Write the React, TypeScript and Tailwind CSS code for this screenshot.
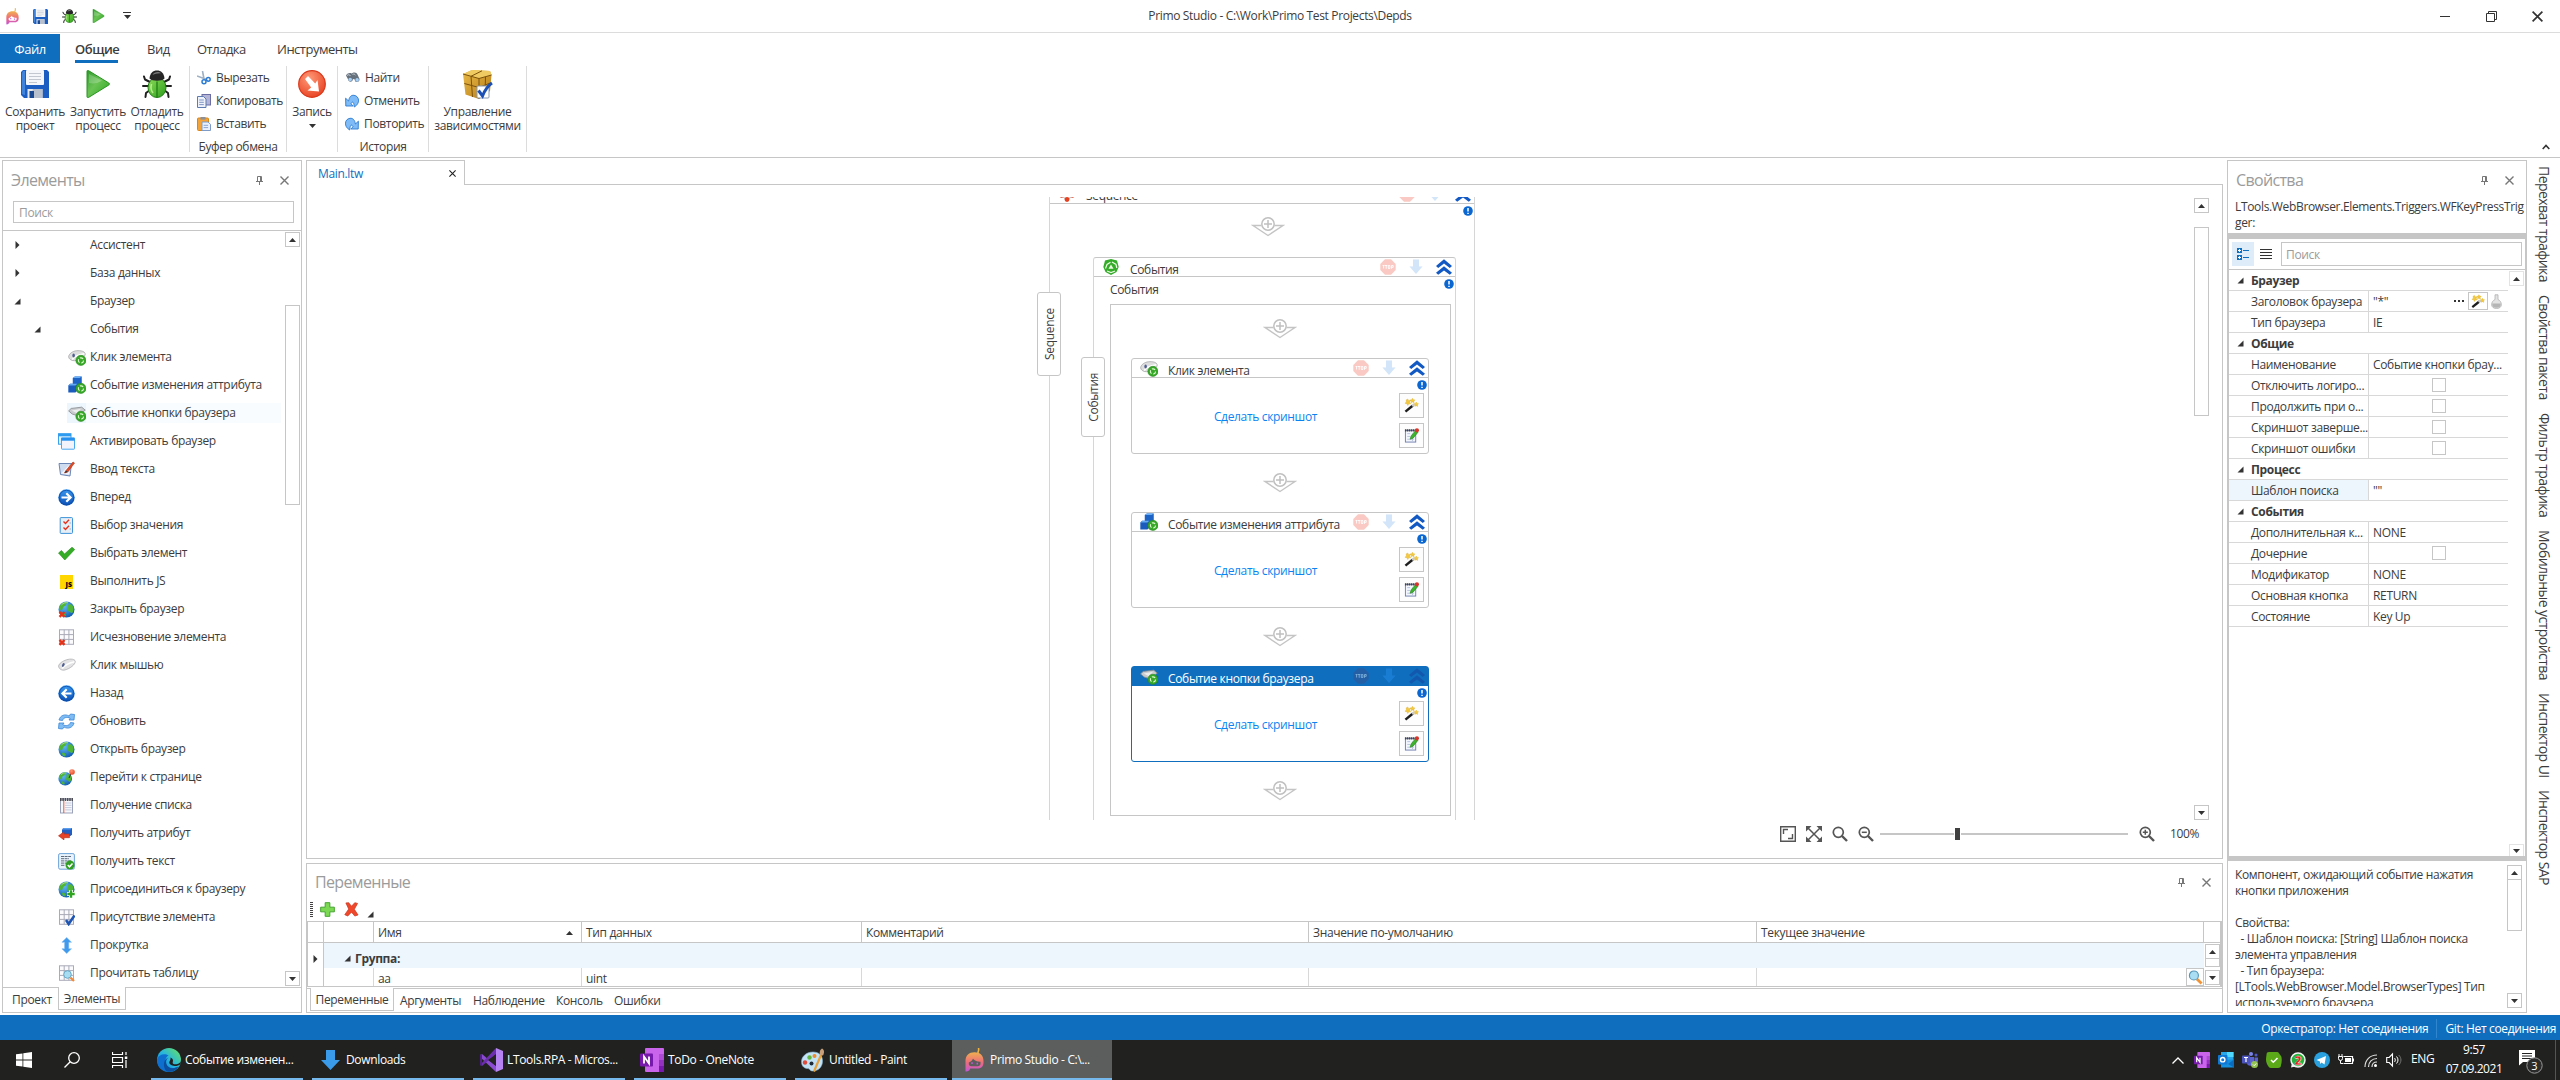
import React from 'react';

type P = { className?: string };
type SvgProps = { className?: string; box?: string; children: React.ReactNode };

const Svg = ({ className = 'w-4 h-4', box = '0 0 16 16', children }: SvgProps) => (
  <svg viewBox={box} className={`${className} block shrink-0`} fill="none">
    {children}
  </svg>
);

/* ---------- gradients shared by all icons ---------- */
const Defs = () => (
  <svg className="absolute w-0 h-0" aria-hidden="true">
    <defs>
      <linearGradient id="gBlue" x1="0" y1="0" x2="0" y2="1">
        <stop offset="0" stopColor="#3b9af0" />
        <stop offset="1" stopColor="#0a4fb4" />
      </linearGradient>
      <linearGradient id="gGreen" x1="0" y1="0" x2="1" y2="1">
        <stop offset="0" stopColor="#8ede5a" />
        <stop offset="1" stopColor="#2c9e1c" />
      </linearGradient>
      <linearGradient id="gPlay" x1="0" y1="0" x2="1" y2="1">
        <stop offset="0" stopColor="#2f9a2c" />
        <stop offset="0.45" stopColor="#6ac455" />
        <stop offset="1" stopColor="#2aa51d" />
      </linearGradient>
      <radialGradient id="gRed" cx="0.4" cy="0.3" r="0.8">
        <stop offset="0" stopColor="#ff9a78" />
        <stop offset="1" stopColor="#e63c1c" />
      </radialGradient>
      <radialGradient id="gGlobe" cx="0.35" cy="0.3" r="0.8">
        <stop offset="0" stopColor="#62b9f5" />
        <stop offset="1" stopColor="#0b55ac" />
      </radialGradient>
      <linearGradient id="gPrimo" x1="0" y1="0" x2="0" y2="1">
        <stop offset="0" stopColor="#f0b050" />
        <stop offset="0.5" stopColor="#ee6f78" />
        <stop offset="1" stopColor="#c455d8" />
      </linearGradient>
      <linearGradient id="gEdge" x1="0" y1="1" x2="1" y2="0">
        <stop offset="0" stopColor="#0c6fd0" />
        <stop offset="0.5" stopColor="#26b5e0" />
        <stop offset="1" stopColor="#6be55a" />
      </linearGradient>
      <linearGradient id="gBox" x1="0" y1="0" x2="1" y2="1">
        <stop offset="0" stopColor="#e9bb4a" />
        <stop offset="1" stopColor="#b77b14" />
      </linearGradient>
    </defs>
  </svg>
);

/* ---------- ribbon icons ---------- */
const Primo = ({ className = 'w-[13px] h-[17px]', face = '#ffffff' }: P & { face?: string }) => (
  <Svg className={className} box="0 0 19 24">
    <path d="M13 4.500c.4-1.600 1-2.400.6-4" stroke="#f3b33c" strokeWidth="1.600" strokeLinecap="round" />
    <path d="M.5 23.500V13C.5 7.500 4 4.300 9.500 4.300S18.500 7.500 18.500 13v1.500c0 4.500-3 6-6 6H5.200C4.600 22.500 2.600 23.800.5 23.500Z" fill="url(#gPrimo)" />
    <path d="M3.800 14.500C6 13.800 7.300 12.300 8 10.800c2 2.300 4.500 3.200 7.500 3v1.700c0 1.700-1.200 2.700-3 2.700H6.300c-1.600 0-2.500-.9-2.500-2.400Z" fill={face} />
    <path d="M7 14.300v1.800M12.300 14.800v1.800" stroke="#c455d8" strokeWidth="1.500" />
  </Svg>
);

const Save = ({ className = 'w-4 h-4' }: P) => (
  <Svg className={className} box="0 0 28 28">
    <path d="M2 0H26L28 2V28H3L0 25V2Z" fill="#1b5dc0" />
    <path d="M1 3 2 1h2v24l-2-.6-1-1Z" fill="#3f83dc" />
    <rect x="5" y="0" width="18" height="15" rx="1" fill="#f4f6f9" />
    <path d="M8 3.500h12M8 6.500h12M8 9.500h12M8 12.500h8" stroke="#c3c8d0" strokeWidth="1.200" />
    <rect x="6.500" y="19" width="15" height="9" fill="#e5e9ee" />
    <path d="M12 19h9.500v9H9Z" fill="#b7c0cc" />
    <rect x="8.500" y="21" width="4.500" height="7" fill="#1b4a92" />
  </Svg>
);

const Play = ({ className = 'w-4 h-4' }: P) => (
  <Svg className={className} box="0 0 24 28">
    <path d="M1 1.200C1 .2 2 .2 2.800.8L22.800 13c.9.7.9 1.400 0 2L2.800 27.300C1.800 27.800 1 27.600 1 26.800Z" fill="url(#gPlay)" stroke="#279321" strokeWidth="1" />
    <path d="M3 4v9c5 1 9 0 13-2.200Z" fill="#fff" opacity=".22" />
  </Svg>
);

const Bug = ({ className = 'w-4 h-4' }: P) => (
  <Svg className={className} box="0 0 30 28">
    <path d="M8 12 3 9.500 2 6.500M22 12l5-2.500 1-3M7 16H1M23 16h6M8 20l-4 3-.5 4M22 20l4 3 .5 4" stroke="#1f1f1f" strokeWidth="2" strokeLinecap="round" strokeLinejoin="round" />
    <ellipse cx="15" cy="17.500" rx="9" ry="10" fill="url(#gGreen)" stroke="#1f7d14" />
    <path d="M7.500 8.500C8 3 11 .5 15 .5s7 2.500 7.500 8C20 11.500 10 11.500 7.500 8.500Z" fill="#262626" />
    <path d="M10.500 5c1-2.200 3-3 5-3 1.600 0 2.600.4 3.600 1.400C16 3.200 13 4 10.500 5Z" fill="#777" />
    <path d="M15 11.500V27" stroke="#1f7d14" strokeWidth="1.300" />
    <path d="M9.500 14c-.8 3-.2 7 1.500 9" stroke="#c8f59c" strokeWidth="1.600" opacity=".8" />
  </Svg>
);

const Cut = () => (
  <Svg className="w-[14px] h-[14px]" box="0 0 14 14">
    <path d="M5.500 0 7 8M0 5l9 3.200" stroke="#9db0c4" strokeWidth="1.600" />
    <circle cx="7" cy="10.800" r="2" stroke="#2c7cd4" strokeWidth="1.500" />
    <circle cx="11.300" cy="8.300" r="1.900" stroke="#2c7cd4" strokeWidth="1.500" />
  </Svg>
);
const Copy = () => (
  <Svg className="w-[14px] h-[14px]" box="0 0 14 14">
    <rect x="5" y=".5" width="8.500" height="10.500" fill="#b4b5d6" stroke="#6b6ea5" />
    <path d="M.5 2.500h6l2.500 2.500v8.500H.5Z" fill="#eef2fb" stroke="#5d7bb0" />
    <path d="M2.200 6h4.600M2.200 8.300h4.600M2.200 10.600h4.600" stroke="#7f96c4" />
  </Svg>
);
const Paste = () => (
  <Svg className="w-[14px] h-[14px]" box="0 0 14 14">
    <rect x=".5" y="1" width="11" height="12.500" rx="1" fill="#f2a33a" stroke="#d98618" />
    <rect x="3.500" y="0" width="5" height="2.600" fill="#8d9097" />
    <path d="M5 5h6l2.500 2.300v6.200H5Z" fill="#e9f0fa" stroke="#7d9bc6" />
    <path d="M6.600 8.300h4.500M6.600 10.600h4.500" stroke="#8aa5cf" />
  </Svg>
);
const Record = () => (
  <Svg className="w-7 h-7" box="0 0 28 28">
    <circle cx="14" cy="14" r="13.300" fill="url(#gRed)" stroke="#d9381a" strokeWidth="1.200" />
    <path d="M7 9 10 6l7.200 7.500L19.500 10l1.500 11.500-11.500-1 3.700-3Z" fill="#fff" />
  </Svg>
);
const Find = () => (
  <Svg className="w-[15px] h-[14px]" box="0 0 14 14">
    <path d="M.5 4.500C2 2 4.500 1.500 6 2.500l2-1c2-.4 3.400.4 4 2L14 8c.3 2.400-2.200 4-4.200 2.500L8.800 8 7.400 8.200 6.800 10C5 11.500 2.800 10.500 2.400 8Z" fill="#66717e" />
    <path d="M1.500 4.500C3 3.300 4 3.500 5 5M7 3.300c1.600-.6 2.500 0 3 1" stroke="#c6ced6" />
    <circle cx="4.700" cy="8.500" r="1.800" fill="#a4d0f5" />
    <circle cx="11.600" cy="8.900" r="1.800" fill="#a4d0f5" />
  </Svg>
);
const Undo = ({ className = '' }: P) => (
  <Svg className={`w-[14px] h-[14px] ${className}`} box="0 0 14 14">
    <path d="M.6 4.200.8 12h7.400L6 9.800C7.200 7 9 7.500 9.300 13 15.500 9.500 14.500 2 9 1.300 6 1 4.200 3 3.600 7Z" fill="#7fbcf7" stroke="#2b7ad0" strokeWidth=".9" strokeLinejoin="round" />
  </Svg>
);
const Packages = () => (
  <Svg className="w-[31px] h-[31px]" box="0 0 31 31">
    <path d="M1 5 10 1l18 1 1.500 4L28 22 17 30 3.500 25.500Z" fill="url(#gBox)" />
    <path d="M1 5 10 1l18 1 1.500 4L17 9.500Z" fill="#efca62" />
    <path d="M1 5l16 4.500L29.500 6M17 9.500V30M9 7.300 10.500 28M2.300 14.500 17 18.500l12-4.800M9 7.300 20 1.800M23.500 8 23 26" stroke="#7c520c" strokeWidth="1" />
    <rect x="15" y="17" width="12" height="12" rx="1" fill="#fff" stroke="#8a9ab0" />
    <path d="m16.500 21.500 4 5.500C22.500 22 25.500 17 30 14" stroke="#1c50b5" strokeWidth="3" />
  </Svg>
);

/* ---------- tree icons ---------- */
const Badge = () => (
  <g>
    <circle cx="12.200" cy="11.700" r="4.800" fill="#37a827" stroke="#22841a" strokeWidth=".5" />
    <circle cx="12.200" cy="11.700" r="2.400" stroke="#dff8d2" strokeWidth="1" strokeDasharray="3.400 1.600" />
  </g>
);
const Mouse = () => (
  <Svg className="w-[18px] h-[18px]" box="0 0 17 17">
    <path d="M.6 9.500C1 7 4 5 8 3.600c4-1.200 8-.7 8.300 1.400.2 3-5 7-9.800 8.200C3.500 14 .6 12 .6 9.500Z" fill="#e3e3e5" stroke="#a8a8ac" strokeWidth=".7" />
    <path d="M4 12C5.500 9.500 9 7 15.500 5.500" stroke="#fff" strokeWidth="1.500" />
    <ellipse cx="5" cy="8.500" rx="1.100" ry="1.900" fill="#4f5f8f" transform="rotate(30 5 8.500)" />
  </Svg>
);
const MouseEvt = () => (
  <Svg className="w-[18px] h-[18px]" box="0 0 17 17">
    <path d="M.6 8.200C1 5.200 4.500 3 8 2.600c4-.3 8 .4 8.300 3.200C15.800 9 10 12 6 12 3 12 .6 10.200.6 8.200Z" fill="#dededf" stroke="#a0a0a4" strokeWidth=".7" />
    <path d="M4 11C5.500 8.500 9 6.500 15.500 5.500" stroke="#fff" strokeWidth="1.500" />
    <ellipse cx="5.300" cy="7" rx="1.200" ry="1.900" fill="#4f5f8f" />
    <Badge />
  </Svg>
);
const CubesEvt = () => (
  <Svg className="w-[18px] h-[18px]" box="0 0 17 17">
    <path d="M4.500 2 6.500.5H13V7L11 8.500H4.500Z" fill="#1d63c6" />
    <path d="M4.500 2 6.500.5H13L11 2Z" fill="#6cb0f5" />
    <path d="M.3 9 2 7.400h6.800V14L7 15.700H.3Z" fill="#1a5bbd" />
    <path d="M.3 9 2 7.400h6.800L7 9Z" fill="#63a9f2" />
    <path d="M9 9.500 10.500 8H15v6l-2 1.500H9Z" fill="#1a5bbd" />
    <Badge />
  </Svg>
);
const KeyEvt = () => (
  <Svg className="w-[18px] h-[18px]" box="0 0 17 17">
    <path d="M.6 6.500 3 4.200 13 3l3.300 2.800L9 11 4 9.500Z" fill="#c9cbce" stroke="#8a8d92" strokeWidth=".8" />
    <path d="M3.500 6.200 12.500 4.500l-4.500 4Z" fill="#eceded" />
    <Badge />
  </Svg>
);
const Windows2 = () => (
  <Svg className="w-[17px] h-[17px]" box="0 0 17 17">
    <rect x=".5" y=".7" width="12.500" height="10.500" fill="#dfeefb" stroke="#39a0ec" />
    <rect x=".5" y=".7" width="12.500" height="2.600" fill="#2f9bf0" />
    <rect x="3.500" y="5" width="13" height="11.200" rx=".6" fill="#f2f3fb" stroke="#4aa8ee" />
    <rect x="3.200" y="4.700" width="13.500" height="3" fill="#2590ee" />
  </Svg>
);
const Input = () => (
  <Svg className="w-[17px] h-[17px]" box="0 0 17 17">
    <path d="M1 2.500h12.500L12 15 2.500 13.500Z" fill="#cfdcf0" stroke="#6c86b5" />
    <path d="M3 12.500 11 4l.5 9.500Z" fill="#eef4fc" />
    <path d="M6.500 12 8 9.500 15 1l1.500 1-6.700 9Z" fill="#e34a25" stroke="#a83216" strokeWidth=".6" />
    <path d="m6.500 12 1.500-2.500 1.700 1.400Z" fill="#333" />
  </Svg>
);
const ArrowBall = ({ className = '' }: P) => (
  <Svg className={`w-[17px] h-[17px] ${className}`} box="0 0 17 17">
    <circle cx="8.500" cy="8.500" r="8.200" fill="url(#gBlue)" />
    <circle cx="8.500" cy="8.500" r="7.200" stroke="#0b4ba8" strokeWidth=".8" />
    <path d="M3.500 8.500h8M8.300 4.200l4.300 4.300-4.300 4.300" stroke="#fff" strokeWidth="2.200" />
  </Svg>
);
const CheckList = () => (
  <Svg className="w-[17px] h-[17px]" box="0 0 17 17">
    <rect x="2.200" y=".6" width="12.300" height="15.800" rx=".8" fill="#e8eef6" stroke="#3f93d8" />
    <path d="m5.500 4.500 2 2L11 2.800M5.500 10.500l2 2L11 8.800" stroke="#e2321c" strokeWidth="1.400" />
    <path d="M11.500 6h1.500M11.500 12h1.500" stroke="#9eb0c7" />
  </Svg>
);
const Check = () => (
  <Svg className="w-[17px] h-[17px]" box="0 0 17 17">
    <path d="M.5 8 3.500 5.500 6.500 9 14 2.200 16.700 4.500 6.800 15Z" fill="#35ac26" stroke="#218a18" strokeWidth=".6" />
  </Svg>
);
const Js = () => (
  <div className="w-[13px] h-[14px] bg-[#ffd600] flex items-end justify-end ml-[2px] mt-px">
    <span className="text-[7px] leading-[8px] font-extrabold tracking-normal text-black pr-px">JS</span>
  </div>
);
const GlobeShape = () => (
  <g>
    <circle cx="8.500" cy="8.500" r="8" fill="url(#gGlobe)" />
    <path d="M2 4.500C3.500 2 6.500.6 9 1c.5 1.500-1.600 1.800-1.200 3.200-1 1.500-2.800 1-3 3C4.500 9 3 9.200 1.500 9c-.5-1.400-.3-3 .5-4.500ZM10.500 3.500c1.500-.6 3-.2 4.300 1.300 1 2.200 1 4.700-.3 6.900-1.700 1-2.300-.9-3.700-1.400-1.600-.5-2-2-.8-3.600.6-.9-.5-1.900.5-3.200ZM4 12c1.500-.6 3 0 3.800 1.500.3 1.200-.6 1.800-1.600 1.800C4.700 14.500 4 13.500 4 12Z" fill="#4fb536" />
    <path d="M3.500 4C5 2 7.500 1.300 10 1.800" stroke="#d4f0c0" strokeWidth="1" opacity=".7" />
  </g>
);
const RedX = () => <path d="m1.500 11 5 4.800M6.500 11l-5 4.800" stroke="#e5331a" strokeWidth="2.400" />;
const GridShape = () => (
  <g>
    <rect x="1.500" y=".8" width="14" height="14.500" fill="#fbfbfd" stroke="#a9abb8" />
    <path d="M6.200.8v14.500M10.900.8v14.500M1.500 5.600h14M1.500 10.400h14" stroke="#a9abb8" strokeWidth="1" />
  </g>
);
const Wrap17 = ({ children }: { children: React.ReactNode }) => (
  <Svg className="w-[17px] h-[17px]" box="0 0 17 17">
    {children}
  </Svg>
);
const Globe = () => <Wrap17><GlobeShape /></Wrap17>;
const GlobeX = () => <Wrap17><GlobeShape /><RedX /></Wrap17>;
const GlobeGo = () => (
  <Wrap17>
    <g transform="translate(0 2.500) scale(.85)"><GlobeShape /></g>
    <path d="M13.500 3.500 11 9" stroke="#333" strokeWidth="1" />
    <circle cx="14" cy="3" r="2.800" fill="url(#gRed)" />
  </Wrap17>
);
const GlobePlus = () => (
  <Wrap17>
    <GlobeShape />
    <path d="M13 9v8M9 13h8" stroke="#fff" strokeWidth="4" />
    <path d="M13 9.300v7.400M9.300 13h7.400" stroke="#2fa41f" strokeWidth="2.400" />
  </Wrap17>
);
const GridX = () => <Wrap17><GridShape /><RedX /></Wrap17>;
const GridCheck = () => (
  <Wrap17>
    <GridShape />
    <path d="m8 11 2.700 4L16.500 6.500" stroke="#1d55b4" strokeWidth="2.600" />
  </Wrap17>
);
const GridFind = () => (
  <Wrap17>
    <GridShape />
    <circle cx="9.500" cy="9.500" r="3.800" fill="#a8dcf0" stroke="#62a8c8" />
    <path d="m12.500 12.500 3.500 3.500" stroke="#f08a3a" strokeWidth="2.200" />
  </Wrap17>
);
const Refresh = () => (
  <Wrap17>
    <path d="M1 7C2 2.500 7 .5 11 3l1.500-2 4 .5-.5 5.500H11l1.200-1.700C9 3.500 5.500 4.500 4.500 7.500Z" fill="#7fbcf4" stroke="#3a86d6" strokeWidth=".8" />
    <path d="M16 10c-1 4.500-6 6.500-10 4l-1.500 2-4-.5.5-5.500h5l-1.200 1.700c3.200 1.800 6.700.8 7.700-2.200Z" fill="#7fbcf4" stroke="#3a86d6" strokeWidth=".8" />
  </Wrap17>
);
const ListPad = () => (
  <Wrap17>
    <rect x="2.500" y="2" width="12" height="14" fill="#f7f8fc" stroke="#9aa3ba" />
    <path d="M2 2.500h13" stroke="#4c4c55" strokeWidth="3" strokeDasharray="1.600 .7" />
    <path d="M7 6h6.500M7 8.300h6.500M7 10.600h6.500M7 12.900h6.500" stroke="#c4cadb" />
    <path d="M5.800 4v12" stroke="#e25b45" />
  </Wrap17>
);
const AttrArrow = () => (
  <Wrap17>
    <path d="M4 4.500 5.500 3h8.500v6.500L12.500 11H4Z" fill="#1d5fc4" />
    <path d="M4 4.500 5.500 3h8.500l-1.500 1.500Z" fill="#5c9eee" />
    <path d="M.5 10.800 6 6.800v2.200h5.500v3.700H6v2.200Z" fill="#e6422a" stroke="#b82c14" strokeWidth=".6" />
  </Wrap17>
);
const TextOk = () => (
  <Wrap17>
    <rect x=".6" y=".6" width="15.800" height="15.600" rx="1.500" fill="#eaf2fb" stroke="#6ea4d8" />
    <path d="M3 3.500h10M3 5.700h8M3 7.900h10M3 10.100h5M3 12.300h4" stroke="#5d6b7c" strokeWidth="1" strokeDasharray="3 .6" />
    <circle cx="12" cy="12" r="4.500" fill="#2f9e22" />
    <path d="m9.700 12 1.800 1.800 3-3.300" stroke="#fff" strokeWidth="1.500" />
  </Wrap17>
);
const Scroll = () => (
  <Wrap17>
    <path d="m8.700.5 4.800 4.700h-2.700v6.600h2.700l-4.800 4.700-4.800-4.700h2.700V5.200H3.900Z" fill="#3f9aee" stroke="#7fb9ec" strokeWidth=".6" />
  </Wrap17>
);

/* ---------- small glyphs ---------- */
const Pin = () => (
  <Svg className="w-[9px] h-[9px]" box="0 0 9 9">
    <path d="M2.500.5h4v5h-4ZM5.500.5v5M1 5.500h7M4.500 5.500V9" stroke="#777" />
  </Svg>
);
const Close = ({ className = 'w-[9px] h-[9px] text-[#777]' }: P) => (
  <Svg className={className} box="0 0 9 9">
    <path d="m.5.5 8 8M8.500.5l-8 8" stroke="currentColor" strokeWidth="1.400" />
  </Svg>
);
const Tri = ({ dir }: { dir: 'up' | 'down' | 'right' | 'corner' }) => {
  const d = { up: 'M0 5 3.500 1 7 5Z', down: 'M0 1h7L3.500 5Z', right: 'M1.500 0v8l4-4Z', corner: 'M6.500 .5v6h-6Z' }[dir];
  return (
    <Svg className={dir === 'right' ? 'w-[7px] h-[8px]' : dir === 'corner' ? 'w-[7px] h-[7px]' : 'w-[7px] h-[6px]'} box={dir === 'right' ? '0 0 7 8' : dir === 'corner' ? '0 0 7 7' : '0 0 7 6'}>
      <path d={d} fill="#333" />
    </Svg>
  );
};
const SBtn = ({ dir, className = '' }: { dir: 'up' | 'down'; className?: string }) => (
  <div className={`w-[15px] h-[15px] shrink-0 bg-white border border-[#c6c6c6] flex items-center justify-center ${className}`}>
    <Tri dir={dir} />
  </div>
);
const Loupe = ({ sign = '' }: { sign?: string }) => (
  <Svg className="w-4 h-4">
    <circle cx="6.300" cy="6.300" r="5" stroke="#555" strokeWidth="1.700" />
    <path d="m10 10 5 5" stroke="#555" strokeWidth="2.400" />
    {sign && <path d={sign} stroke="#555" strokeWidth="1.500" />}
  </Svg>
);
const Wand = ({ className = 'w-[15px] h-[15px]' }: P) => (
  <Svg className={className}>
    <path d="m1.500 14.500 8-6.500" stroke="#1d1d1d" strokeWidth="2.600" />
    <path d="m8.800 8.600 2.400-2" stroke="#c8c8c8" strokeWidth="2.600" />
    <path d="m4 1 1 1.800 2-.3-1 1.900 1.300 1.700-2.200.1L4 8 3 6 1 5.600l1.600-1.400L2.300 2ZM9 .3l1 1.500 1.700.2-1.200 1.300L10.800 5 9 4.300 7.500 5l.2-1.700L6.500 2l1.800-.2ZM13 4.300l.8 1.500 1.700.3-1.200 1.200.2 1.700-1.500-.8-1.500.7.3-1.700-1.200-1.200 1.700-.2Z" fill="#f5c93c" stroke="#d9ac24" strokeWidth=".4" />
  </Svg>
);
const Edit = () => (
  <Svg className="w-[15px] h-[15px]">
    <rect x="1.500" y="2.500" width="11" height="12.500" fill="#f4f6fd" stroke="#6f7fae" />
    <path d="M1 2.500h11.500" stroke="#444" strokeWidth="2.400" strokeDasharray="1.500 .6" />
    <path d="M3.500 6h3M3.500 9h3M3.500 12h7M9 6v8" stroke="#b5bfdd" />
    <path d="m6.500 12 1-3.500L12.500 2.500l2.500 2-5.300 6.300Z" fill="#3cb52c" stroke="#247c1a" strokeWidth=".6" />
    <circle cx="13.800" cy="2.500" r="2.200" fill="#d8352a" />
  </Svg>
);
const Lens = () => (
  <Svg className="w-[15px] h-[15px]">
    <path d="m9.500 9.500 5 5" stroke="#f09236" strokeWidth="3" />
    <circle cx="6.300" cy="5.800" r="4.800" fill="#a9def3" stroke="#5796b8" strokeWidth="1.200" />
  </Svg>
);

/* ---------- title bar + ribbon ---------- */
const TitleBar = () => (
  <div className="h-[33px] border-b border-[#dcdcdc] flex items-center relative">
    <div className="flex items-center pl-[6px]">
      <Primo />
      <Save className="w-[15px] h-[15px] ml-[14px]" />
      <Bug className="w-[15px] h-[14px] ml-[14px]" />
      <Play className="w-[13px] h-[14px] ml-[15px]" />
      <div className="ml-[18px] flex flex-col items-center gap-px">
        <div className="w-2 h-px bg-[#333]" />
        <Tri dir="down" />
      </div>
    </div>
    <div className="absolute inset-x-0 text-center pointer-events-none">Primo Studio - C:\Work\Primo Test Projects\Depds</div>
    <div className="ml-auto flex items-center pr-[17px]">
      <div className="w-[10px] h-px bg-[#333]" />
      <Svg className="w-[11px] h-[11px] ml-[36px]" box="0 0 11 11">
        <path d="M.5 2.500h8v8h-8ZM2.500 2.500v-2h8v8h-2" stroke="#333" />
      </Svg>
      <Close className="w-[11px] h-[11px] ml-[35px] text-[#333]" />
    </div>
  </div>
);

const Big = ({ icon, l1, l2, className }: { icon: React.ReactNode; l1: string; l2?: string; className: string }) => (
  <div className={`flex flex-col items-center pt-1 shrink-0 whitespace-nowrap ${className}`}>
    <div className="h-7 flex items-center">{icon}</div>
    <div className="mt-[7px] h-[14px] leading-[14px]">{l1}</div>
    {l2 ? <div className="leading-[14px]">{l2}</div> : <div className="mt-[4px]"><Tri dir="down" /></div>}
  </div>
);
const Small = ({ icon, label }: { icon: React.ReactNode; label: string }) => (
  <div className="h-[23px] flex items-center gap-[5px] whitespace-nowrap">{icon}<span className="pt-px">{label}</span></div>
);
const RSep = () => <div className="w-px h-[86px] bg-[#dcdcdc] shrink-0" />;

const Ribbon = () => (
  <div className="h-[125px] border-b border-[#c6c6c6] relative flex flex-col">
    <div className="h-[34px] flex items-start pt-px text-[13px] tracking-[-0.5px] whitespace-nowrap">
      <div className="w-[60px] h-[29px] bg-[#106ebe] text-white flex items-center justify-center pt-px">Файл</div>
      <div className="ml-[15px] h-[29px] w-[43px] border-b-[3px] border-[#106ebe] font-semibold flex items-center pt-[3px]">Общие</div>
      <div className="ml-[29px] h-[29px] w-[50px] flex items-center">Вид</div>
      <div className="h-[29px] w-[80px] flex items-center">Отладка</div>
      <div className="h-[29px] flex items-center">Инструменты</div>
    </div>
    <div className="flex">
      <Big className="w-[60px] ml-[5px]" icon={<Save className="w-7 h-7" />} l1="Сохранить" l2="проект" />
      <Big className="w-[60px] ml-[3px]" icon={<Play className="w-6 h-7" />} l1="Запустить" l2="процесс" />
      <Big className="w-[58px]" icon={<Bug className="w-[30px] h-7" />} l1="Отладить" l2="процесс" />
      <div className="w-[3px]" />
      <RSep />
      <div className="w-[96px] pl-[7px] shrink-0">
        <Small icon={<Cut />} label="Вырезать" />
        <Small icon={<Copy />} label="Копировать" />
        <Small icon={<Paste />} label="Вставить" />
        <div className="-ml-[7px] text-center h-[22px] leading-[24px] whitespace-nowrap">Буфер обмена</div>
      </div>
      <RSep />
      <Big className="w-[50px]" icon={<Record />} l1="Запись" />
      <RSep />
      <div className="w-[90px] pl-[7px] shrink-0">
        <Small icon={<Find />} label="Найти" />
        <Small icon={<Undo />} label="Отменить" />
        <Small icon={<Undo className="-scale-x-100" />} label="Повторить" />
        <div className="-ml-[7px] text-center h-[22px] leading-[24px]">История</div>
      </div>
      <RSep />
      <Big className="w-[97px]" icon={<Packages />} l1="Управление" l2="зависимостями" />
      <RSep />
    </div>
    <Svg className="w-2 h-[6px] absolute right-[10px] bottom-[7px]" box="0 0 8 6">
      <path d="m.7 5 3.300-3.500L7.300 5" stroke="#333" strokeWidth="1.600" />
    </Svg>
  </div>
);

const PanelTitle = ({ children, className = '' }: { children: React.ReactNode; className?: string }) => (
  <div className={`h-[38px] flex items-center pl-2 pr-3 ${className}`}>
    <span className="text-[16px] text-[#9b9b9b] grow tracking-[-0.65px]">{children}</span>
    <Pin />
    <Close className="w-[9px] h-[9px] text-[#777] ml-4 mt-px" />
  </div>
);

/* ---------- elements tree ---------- */
type Row = { t: string; i?: React.ReactNode; lvl?: number; sel?: boolean; arrow?: 'right' | 'corner' };
const tree: Row[] = [
  { t: 'Ассистент', arrow: 'right', lvl: 0 },
  { t: 'База данных', arrow: 'right', lvl: 0 },
  { t: 'Браузер', arrow: 'corner', lvl: 0 },
  { t: 'События', arrow: 'corner', lvl: 1 },
  { t: 'Клик элемента', i: <MouseEvt />, lvl: 2 },
  { t: 'Событие изменения аттрибута', i: <CubesEvt />, lvl: 2 },
  { t: 'Событие кнопки браузера', i: <KeyEvt />, lvl: 2, sel: true },
  { t: 'Активировать браузер', i: <Windows2 /> },
  { t: 'Ввод текста', i: <Input /> },
  { t: 'Вперед', i: <ArrowBall /> },
  { t: 'Выбор значения', i: <CheckList /> },
  { t: 'Выбрать элемент', i: <Check /> },
  { t: 'Выполнить JS', i: <Js /> },
  { t: 'Закрыть браузер', i: <GlobeX /> },
  { t: 'Исчезновение элемента', i: <GridX /> },
  { t: 'Клик мышью', i: <Mouse /> },
  { t: 'Назад', i: <ArrowBall className="-scale-x-100" /> },
  { t: 'Обновить', i: <Refresh /> },
  { t: 'Открыть браузер', i: <Globe /> },
  { t: 'Перейти к странице', i: <GlobeGo /> },
  { t: 'Получение списка', i: <ListPad /> },
  { t: 'Получить атрибут', i: <AttrArrow /> },
  { t: 'Получить текст', i: <TextOk /> },
  { t: 'Присоединиться к браузеру', i: <GlobePlus /> },
  { t: 'Присутствие элемента', i: <GridCheck /> },
  { t: 'Прокрутка', i: <Scroll /> },
  { t: 'Прочитать таблицу', i: <GridFind /> },
];

const TreeRow = ({ r }: { r: Row }) => (
  <div className="h-7 flex items-center">
    <div className={`h-5 flex items-center shrink-0 ${r.lvl === 2 ? 'w-[64px]' : r.lvl === 1 ? 'w-[85px] pl-[31px]' : r.arrow ? 'w-[85px] pl-[11px]' : 'w-[55px]'}`}>
      {r.arrow && <Tri dir={r.arrow} />}
    </div>
    {r.i && (
      <div className={`h-5 flex items-center shrink-0 ${r.lvl === 2 ? 'w-[19px] pl-px' : 'w-[30px]'} ${r.sel ? 'bg-[#edf5fd]' : ''}`}>{r.i}</div>
    )}
    <div className={`h-5 grow mr-5 flex items-center whitespace-nowrap ${r.lvl === 2 ? 'pl-[4px]' : 'pl-[2px]'} ${r.sel ? 'bg-[#f9fcff]' : ''}`}>{r.t}</div>
  </div>
);

const Elements = () => (
  <div className="w-[300px] h-[853px] ml-[2px] border border-[#c6c6c6] flex flex-col shrink-0">
    <PanelTitle>Элементы</PanelTitle>
    <div className="mt-[2px] ml-[10px] w-[281px] h-[22px] border border-[#c6c6c6] flex items-center pl-[5px] pt-[2px] text-[#9b9b9b]">Поиск</div>
    <div className="mt-[7px] border-t border-[#c6c6c6] h-[757px] flex shrink-0">
      <div className="grow">{tree.map((r) => <TreeRow key={r.t} r={r} />)}</div>
      <div className="w-[16px] -ml-4 flex flex-col pt-px pb-px">
        <SBtn dir="up" />
        <div className="mt-[58px] w-[15px] h-[200px] border border-[#c6c6c6]" />
        <SBtn dir="down" className="mt-auto" />
      </div>
    </div>
    <div className="flex border-t border-[#c6c6c6] h-[25px] pl-[9px]">
      <div className="w-[46px] h-[22px] flex items-center pt-px">Проект</div>
      <div className="w-[68px] h-[23px] -mt-px bg-white border border-t-0 border-[#c6c6c6] flex items-center justify-center pt-[2px]">Элементы</div>
    </div>
  </div>
);

/* ---------- workflow canvas ---------- */
const AddPoint = ({ className }: P) => (
  <svg viewBox="0 0 34 20" className={`absolute w-[34px] h-5 ${className}`} fill="none">
    <path d="M10.500 8.500H2L17 18.500 32 8.500H23.500" stroke="#c4c4c4" strokeWidth="1.400" />
    <circle cx="17" cy="7" r="6.200" fill="#fff" stroke="#c0c0c0" strokeWidth="1.500" />
    <path d="M17 3v8M13 7h8" stroke="#c0c0c0" strokeWidth="1.500" />
  </svg>
);
const InfoDot = ({ className = '' }: P) => (
  <svg viewBox="0 0 10 10" className={`w-[10px] h-[10px] absolute ${className}`}>
    <circle cx="5" cy="5" r="4.800" fill="#0a66d0" />
    <path d="M5 2v3.500M5 6.800v1.300" stroke="#fff" strokeWidth="1.500" />
  </svg>
);
const HeadIcons = ({ dim = false }: { dim?: boolean }) => (
  <div className="ml-auto flex items-center shrink-0">
    <Svg className={dim ? 'w-4 h-4 opacity-45' : 'w-4 h-4 opacity-30'}>
      <path d="M5 .3h6L15.700 5v6L11 15.700H5L.3 11V5Z" fill={dim ? '#3d4f8a' : '#f0503c'} />
      <path d="M2.600 6.500h2M3.600 6.500v3M5 6.500h2.400M6.200 6.500v3.300M8.300 6.500h1.600v3H8.300ZM11.500 9.800V6.500h1.700v1.800h-1.700" stroke="#fff" strokeWidth=".9" />
    </Svg>
    <Svg className="w-[14px] h-4 ml-[13px] opacity-35" box="0 0 14 16">
      <path d="M4 .5h6v7h3.500L7 15 .5 7.500H4Z" fill={dim ? '#2f9bff' : '#7fb6ee'} />
    </Svg>
    <Svg className={dim ? 'w-4 h-4 ml-[13px] opacity-70' : 'w-4 h-4 ml-[13px]'}>
      <path d="M8 .2 16 7l-2.200 2L8 4.500 2.200 9 0 7ZM8 7.200l8 6.600-2.200 2L8 11.400l-5.800 4.400-2.200-2Z" fill={dim ? '#1450a8' : '#1259c4'} />
    </Svg>
  </div>
);
const Recycle = () => (
  <Svg className="w-4 h-4">
    <path d="M2 1.500 8 0l6 1.500L15.700 8 13.500 13 8 16 2.500 13 .3 8Z" fill="#35ab2a" />
    <path d="M2.500 9.500 4 5.500 7.500 3.200M9 3l4 2.500.8 3.500M12 12 8 13.500 4 12" stroke="#eafbe2" strokeWidth="1.200" />
    <path d="M5.500 9.800 8 5.500l2.500 4.300Z" fill="#eafbe2" />
  </Svg>
);

const Node = ({ title, icon, top, active = false }: { title: string; icon: React.ReactNode; top: string; active?: boolean }) => (
  <div className={`absolute left-[824px] ${top} w-[298px] h-24 rounded-[3px] border bg-white ${active ? 'border-[#106ebe]' : 'border-[#c6c6c6]'}`}>
    <div className={`h-[19px] flex items-center pl-2 pr-[3px] border-b ${active ? 'bg-[#106ebe] border-[#106ebe] text-white' : 'border-[#c6c6c6]'}`}>
      {icon}
      <span className="ml-[10px] pt-1 leading-[15px] whitespace-nowrap">{title}</span>
      <HeadIcons dim={active} />
    </div>
    <InfoDot className="right-[1px] top-[21px]" />
    <div className="flex items-center h-[76px]">
      <div className="w-[267px] text-center text-[#0b84f2] pt-[2px]">Сделать скриншот</div>
      <div className="flex flex-col gap-[5px] pt-[8px]">
        <div className="w-[25px] h-[25px] border border-[#c6c6c6] flex items-center justify-center bg-[#fdfdfd]"><Wand /></div>
        <div className="w-[25px] h-[25px] border border-[#c6c6c6] flex items-center justify-center bg-[#fdfdfd]"><Edit /></div>
      </div>
    </div>
  </div>
);

const SideTab = ({ label, className }: { label: string; className: string }) => (
  <div className={`absolute w-6 bg-white border border-[#c6c6c6] rounded-[3px] flex items-center justify-center pl-[2px] ${className}`}>
    <span className="[writing-mode:vertical-rl] rotate-180 whitespace-nowrap">{label}</span>
  </div>
);

/* Origin of this surface is (307, 197) of the window. */
const Canvas = () => (
  <div className="relative h-[623px] overflow-hidden">
    <div className="absolute left-[742px] -top-[14px] w-[426px] h-[660px] border border-[#d6d6d6]">
      <div className="h-[20px] border-b border-[#c6c6c6] flex items-center pl-[9px] pr-[3px]">
        <Svg className="w-4 h-4">
          <path d="m8 15 3.500-4L15 10.500M8 15l-3.500-4L1 10.500" stroke="#aaa" />
          <circle cx="8" cy="13.500" r="2.400" fill="#e5401f" />
          <circle cx="2.500" cy="10" r="1.800" fill="#e5401f" />
          <circle cx="13.500" cy="10" r="1.800" fill="#e5401f" />
        </Svg>
        <span className="ml-[11px] pt-[5px]">Sequence</span>
        <HeadIcons />
      </div>
      <InfoDot className="right-[1px] top-[22px]" />
    </div>
    <AddPoint className="left-[944px] top-[20px]" />
    <div className="absolute left-[786px] top-[60px] w-[363px] h-[600px] border border-[#d6d6d6] border-t-[#c6c6c6] rounded-t-[3px] bg-white">
      <div className="h-[19px] border-b border-[#c6c6c6] flex items-center pl-[9px] pr-[3px]">
        <Recycle />
        <span className="ml-[11px] pt-[5px]">События</span>
        <HeadIcons />
      </div>
      <div className="pl-4 pt-[4px] leading-[18px]">События</div>
      <InfoDot className="right-[1px] top-[21px]" />
    </div>
    <div className="absolute left-[803px] top-[107px] w-[341px] h-[512px] border border-[#c6c6c6]" />
    <AddPoint className="left-[956px] top-[122px]" />
    <Node top="top-[161px]" title="Клик элемента" icon={<MouseEvt />} />
    <AddPoint className="left-[956px] top-[276px]" />
    <Node top="top-[315px]" title="Событие изменения аттрибута" icon={<CubesEvt />} />
    <AddPoint className="left-[956px] top-[430px]" />
    <Node top="top-[469px]" title="Событие кнопки браузера" icon={<KeyEvt />} active />
    <AddPoint className="left-[956px] top-[584px]" />
    <SideTab label="Sequence" className="left-[730px] top-[95px] h-[84px]" />
    <SideTab label="События" className="left-[774px] top-[160px] h-20" />
    <div className="absolute right-[13px] top-0 w-[15px] h-[623px] flex flex-col">
      <SBtn dir="up" className="mt-px" />
      <div className="mt-[14px] h-[189px] border border-[#c6c6c6]" />
      <SBtn dir="down" className="mt-auto" />
    </div>
  </div>
);

const Editor = () => (
  <div className="h-[699px] flex flex-col">
    <div className="flex h-[25px] shrink-0">
      <div className="w-[159px] border border-b-0 border-[#c6c6c6] flex items-center pl-[11px] pr-[8px] text-[#106ebe] pb-px">
        <span className="grow pt-[3px]">Main.ltw</span>
        <Close className="w-[7px] h-[7px] text-[#222] mt-px" />
      </div>
      <div className="grow border-b border-[#c6c6c6]" />
    </div>
    <div className="grow border border-t-0 border-[#c6c6c6] pt-3">
      <Canvas />
      <div className="h-[27px] flex items-center justify-end pr-[21px]">
        <Svg className="w-4 h-4">
          <path d="M.7.7h14.600v14.600H.7Z" stroke="#555" strokeWidth="1.400" />
          <path d="M3.500 8V3.500H8M12.500 8v4.500H8" stroke="#555" strokeWidth="1.400" />
        </Svg>
        <Svg className="w-4 h-4 ml-[10px]">
          <path d="M1.500 1.500 14.500 14.500M14.500 1.500 1.500 14.500" stroke="#555" strokeWidth="1.500" />
          <path d="M0 0h5.500L0 5.500ZM16 0v5.500L10.500 0ZM0 16v-5.500L5.500 16ZM16 16h-5.500L16 10.500Z" fill="#555" />
        </Svg>
        <div className="ml-[10px]"><Loupe /></div>
        <div className="ml-[10px]"><Loupe sign="M3.800 6.300h5" /></div>
        <div className="ml-[6px] w-[248px] h-4 flex items-center">
          <div className="w-[74px] h-[2px] bg-[#c6c6c6]" />
          <div className="w-[5px] h-3 bg-[#404040] mx-px" />
          <div className="grow h-[2px] bg-[#c6c6c6]" />
        </div>
        <div className="ml-[11px]"><Loupe sign="M3.800 6.300h5M6.300 3.800v5" /></div>
        <div className="w-[31px] ml-[15px]">100%</div>
      </div>
    </div>
  </div>
);

/* ---------- variables ---------- */
const Variables = () => (
  <div className="h-[150px] mt-1 border border-[#c6c6c6] flex flex-col">
    <PanelTitle className="h-[34px] pr-[11px]">Переменные</PanelTitle>
    <div className="h-[22px] flex items-start pl-[3px] pt-[2px]">
      <Svg className="w-[3px] h-4" box="0 0 3 16">
        <path d="M1.500 0v16" stroke="#444" strokeWidth="3" strokeDasharray="1 1" />
      </Svg>
      <Svg className="w-[15px] h-[15px] ml-[7px]">
        <path d="M5.500.7h5v4.800h4.800v5h-4.800v4.800h-5v-4.800H.7v-5h4.800Z" fill="#7bd852" stroke="#3da028" strokeWidth="1" />
      </Svg>
      <Svg className="w-[15px] h-[15px] ml-[9px]">
        <path d="M2 1 5 .7 8 4.500 11.500.7l3 .8L11 7.800l4 6-3.500 1.200L8 10.800 4 15 .8 13.500 5 7.500Z" fill="#f0482a" stroke="#c5301a" strokeWidth=".7" />
      </Svg>
      <div className="ml-[8px] mt-[9px]"><Tri dir="corner" /></div>
    </div>
    <div className="h-[66px] border border-[#c6c6c6] border-r-[2px] flex flex-col overflow-hidden shrink-0">
      <div className="h-[21px] border-b border-[#c6c6c6] flex shrink-0 [&>div]:border-r [&>div]:border-[#c6c6c6] [&>div]:shrink-0 [&>div]:flex [&>div]:items-center [&>div]:pl-[4px] [&>div]:pt-[2px]">
        <div className="w-[16px]" />
        <div className="w-[50px]" />
        <div className="w-[208px] justify-between pr-2">Имя<Tri dir="up" /></div>
        <div className="w-[280px]">Тип данных</div>
        <div className="w-[447px]">Комментарий</div>
        <div className="w-[448px]">Значение по-умолчанию</div>
        <div className="w-[447px]">Текущее значение</div>
      </div>
      <div className="flex h-[43px]">
        <div className="w-[16px] border-r border-[#c6c6c6] flex justify-center pt-[12px] shrink-0"><Tri dir="right" /></div>
        <div className="w-[1880px] shrink-0">
          <div className="h-[25px] bg-[#edf5fd] flex items-center pl-[20px] gap-[4px] font-bold pt-[6px]"><Tri dir="corner" />Группа:</div>
          <div className="h-[18px] flex [&>div]:border-r [&>div]:border-[#d8d8d8] [&>div]:shrink-0 [&>div]:pl-[4px] leading-[22px]">
            <div className="w-[50px]" />
            <div className="w-[208px]">aa</div>
            <div className="w-[280px]">uint</div>
            <div className="w-[447px]" />
            <div className="w-[448px]" />
            <div className="w-[447px] flex justify-end !border-r-0">
              <div className="w-[18px] h-[18px] border border-[#c6c6c6] flex items-center justify-center"><Lens /></div>
            </div>
          </div>
        </div>
        <div className="flex flex-col pt-px pl-px">
          <SBtn dir="up" />
          <div className="w-[15px] h-2 border border-t-0 border-[#c6c6c6]" />
          <SBtn dir="down" className="mt-[3px]" />
        </div>
      </div>
    </div>
    <div className="mt-px border-t border-[#c6c6c6] flex h-[25px] pl-[3px] whitespace-nowrap [&>div]:pt-px">
      <div className="w-[84px] h-[23px] -mt-px bg-white border border-t-0 border-[#c6c6c6] flex items-center justify-center">Переменные</div>
      <div className="w-[73px] pl-[6px] h-[22px] flex items-center">Аргументы</div>
      <div className="w-[83px] pl-[6px] h-[22px] flex items-center">Наблюдение</div>
      <div className="w-[58px] pl-[6px] h-[22px] flex items-center">Консоль</div>
      <div className="pl-[6px] h-[22px] flex items-center">Ошибки</div>
    </div>
  </div>
);

/* ---------- properties ---------- */
type PropRow = { n: string; v?: string; head?: boolean; box?: boolean; sel?: boolean; tools?: boolean };
const props: PropRow[] = [
  { n: 'Браузер', head: true },
  { n: 'Заголовок браузера', v: '"*"', tools: true },
  { n: 'Тип браузера', v: 'IE' },
  { n: 'Общие', head: true },
  { n: 'Наименование', v: 'Событие кнопки брау...' },
  { n: 'Отключить логиро...', box: true },
  { n: 'Продолжить при о...', box: true },
  { n: 'Скриншот заверше...', box: true },
  { n: 'Скриншот ошибки', box: true },
  { n: 'Процесс', head: true },
  { n: 'Шаблон поиска', v: '""', sel: true },
  { n: 'События', head: true },
  { n: 'Дополнительная к...', v: 'NONE' },
  { n: 'Дочерние', box: true },
  { n: 'Модификатор', v: 'NONE' },
  { n: 'Основная кнопка', v: 'RETURN' },
  { n: 'Состояние', v: 'Key Up' },
];

const PropLine = ({ p }: { p: PropRow }) =>
  p.head ? (
    <div className="h-[21px] border-b border-[#d8d8d8] flex items-center pl-2 gap-[7px] font-bold"><Tri dir="corner" /><span className="pt-[2px]">{p.n}</span></div>
  ) : (
    <div className="h-[21px] border-b border-[#d8d8d8] flex whitespace-nowrap">
      <div className={`w-[140px] pl-[22px] pt-[2px] border-r border-[#d8d8d8] flex items-center shrink-0 ${p.sel ? 'bg-[#edf5fd]' : ''}`}>{p.n}</div>
      {p.box ? (
        <div className="grow flex items-center justify-center"><div className="w-[14px] h-[14px] border border-[#c6c6c6]" /></div>
      ) : (
        <div className="grow flex items-center pl-1 pt-[2px]">{p.v}</div>
      )}
      {p.tools && (
        <div className="flex items-center pr-[6px]">
          <div className="flex gap-[2px] mr-1"><i className="w-[2px] h-[2px] bg-[#333]" /><i className="w-[2px] h-[2px] bg-[#333]" /><i className="w-[2px] h-[2px] bg-[#333]" /></div>
          <div className="w-[20px] h-[18px] border border-[#c6c6c6] flex items-center justify-center"><Wand className="w-[14px] h-[15px]" /></div>
          <Svg className="w-[11px] h-[15px] ml-[3px]" box="0 0 11 15">
            <path d="M4 .8h3v4.700c4.500 2 5 9-1.500 9S-.5 7.500 4 5.500Z" fill="#e3e3e3" stroke="#b0b0b0" strokeWidth=".8" />
            <path d="M1.200 9.500h8.600c.3 2.800-1.300 4.300-4.300 4.300S.9 12.300 1.200 9.500Z" fill="#b5b5b5" />
          </Svg>
        </div>
      )}
    </div>
  );

const Properties = () => (
  <div className="w-[300px] h-[853px] ml-1 border border-[#c6c6c6] flex flex-col shrink-0">
    <PanelTitle>Свойства</PanelTitle>
    <div className="h-[34px] pl-[7px] leading-4 whitespace-nowrap">LTools.WebBrowser.Elements.Triggers.WFKeyPressTrig<br />ger:</div>
    <div className="h-[628px] border-t-[6px] border-b-[5px] border-x border-[#c6c6c6] flex flex-col shrink-0">
      <div className="h-[31px] border-b border-[#c6c6c6] flex items-start pt-[3px] pl-[3px] shrink-0">
        <div className="w-[22px] h-6 bg-[#deecf9] flex items-center justify-center">
          <Svg className="w-3 h-3" box="0 0 12 12">
            <path d="M0 0h5v5H0ZM0 7h5v5H0Z" fill="#106ebe" />
            <path d="M1 2.500h3M2.500 1v3M1 9.500h3M2.500 8v3" stroke="#fff" />
            <path d="M6 2.500h6M6 9.500h6" stroke="#106ebe" />
          </Svg>
        </div>
        <Svg className="w-3 h-[11px] ml-[6px] mt-[7px]" box="0 0 12 11">
          <path d="M0 .5h12M0 3.500h12M0 6.500h12M0 9.500h12" stroke="#333" />
        </Svg>
        <div className="ml-[9px] w-[241px] h-6 border border-[#c6c6c6] pl-[4px] pt-[2px] flex items-center text-[#9b9b9b]">Поиск</div>
      </div>
      <div className="grow flex">
        <div className="w-[279px]">{props.map((p) => <PropLine key={p.n} p={p} />)}</div>
        <div className="ml-px w-[15px] flex flex-col pt-px">
          <SBtn dir="up" className="border-[#e3e3e3]" />
          <SBtn dir="down" className="mt-auto !h-3 border-[#e3e3e3] border-b-0" />
        </div>
      </div>
    </div>
    <div className="h-[151px] flex pl-[7px] pr-1 pt-[6px] shrink-0">
      <div className="grow h-[139px] overflow-hidden leading-4 whitespace-pre">
        {'Компонент, ожидающий событие нажатия\nкнопки приложения\n\nСвойства:\n  - Шаблон поиска: [String] Шаблон поиска\nэлемента управления\n  - Тип браузера:\n[LTools.WebBrowser.Model.BrowserTypes] Тип\nиспользуемого браузера'}
      </div>
      <div className="w-[15px] h-[143px] -mt-[2px] flex flex-col shrink-0">
        <SBtn dir="up" />
        <div className="h-[52px] -mt-px border border-[#c6c6c6]" />
        <SBtn dir="down" className="mt-auto" />
      </div>
    </div>
  </div>
);

const RightTabs = () => (
  <div className="grow flex flex-col items-center pt-[6px] pl-[1px] gap-[13px] text-[14px] leading-[20px] tracking-[-0.55px]">
    {['Перехват трафика', 'Свойства пакета', 'Фильтр трафика', 'Мобильные устройства', 'Инспектор UI', 'Инспектор SAP'].map((t) => (
      <div key={t} className="[writing-mode:vertical-rl] whitespace-nowrap">{t}</div>
    ))}
  </div>
);

/* ---------- taskbar ---------- */
const OneNote = ({ className }: P) => (
  <Svg className={className} box="0 0 24 24">
    <rect x="5" y="0" width="19" height="24" rx="1" fill="#ca64ea" />
    <path d="M19 6h5v6h-5Z" fill="#ae4bd5" />
    <path d="M19 12h5v6h-5Z" fill="#9332bf" />
    <path d="M19 18h5v6H19Z" fill="#7719aa" />
    <rect x="0" y="5.500" width="13" height="13" rx="1" fill="#7719aa" />
    <path d="M4 15.500v-7l5 7v-7" stroke="#fff" strokeWidth="1.800" />
  </Svg>
);
const apps: { t: string; i: React.ReactNode }[] = [
  {
    t: 'Событие изменен...',
    i: (
      <Svg className="w-6 h-6" box="0 0 24 24">
        <circle cx="12" cy="12" r="12" fill="url(#gEdge)" />
        <path d="M.2 11C2 6 8 5 11.500 7.500c-3 1.500-4 5-2.500 8.500 1.500 3.500 6 5.500 12.500 2.500C18 24.500 9 25.500 4 21 1 18.500 0 15 .2 11Z" fill="#0f6fcf" />
        <path d="M11.500 9.500c-3 2-3 6-1 8.500 2.500 3 7 3 11 .5-3 5-8 6.200-12 4.800C6 20 5.500 11.500 11.500 9.500Z" fill="#0b4f9e" />
        <path d="M13.500 9.500c2 .5 3 2.500 2.300 4.500-.8 1.500 1 2.500 3.500 2.300 3-.3 4.700-2.300 4.700-4.300l-.5 4c-3 3-9.500 2.500-11-.5-1-2 1.500-3 1-6Z" fill="#202020" />
      </Svg>
    ),
  },
  {
    t: 'Downloads',
    i: (
      <Svg className="w-6 h-6" box="0 0 24 24">
        <path d="M8 2h9v10h5l-9.500 10L3 12h5Z" fill="#3a9bea" />
      </Svg>
    ),
  },
  {
    t: 'LTools.RPA - Micros...',
    i: (
      <Svg className="w-6 h-6" box="0 0 24 24">
        <path d="M17 0v24l-16-15 0-2 2-1 14 12Z" fill="#8a4bd0" />
        <path d="M1 17 17 0v6L3 18Z" fill="#6b2fae" />
        <path d="M1 7v10l2 1V6Z" fill="#52218a" />
        <path d="M17 6.500 9 12l8 6Z" fill="#222" />
        <path d="M17 0l7 3v18l-7 3Z" fill="#b583f2" />
      </Svg>
    ),
  },
  { t: 'ToDo - OneNote', i: <OneNote className="w-6 h-6" /> },
  {
    t: 'Untitled - Paint',
    i: (
      <Svg className="w-6 h-6" box="0 0 24 24">
        <path d="M12 4C5 4 0 9 .5 14.500c.4 4 3 6 6.500 6 2 0 1.500 2.500 4.500 2.500 6 0 10-4 10-10C21.500 7 17.500 4 12 4Z" fill="#c4e4f5" stroke="#89b4cf" strokeWidth=".6" />
        <circle cx="4" cy="14.500" r="2.200" fill="#e24a3a" />
        <circle cx="8.500" cy="9.500" r="2.200" fill="#62b83e" />
        <circle cx="13.500" cy="8" r="2" fill="#f0882c" />
        <circle cx="10.500" cy="15.500" r="2" fill="#1d2c38" />
        <path d="M20 7 13 23.500" stroke="#e8a23c" strokeWidth="2.200" />
        <path d="M19 7C18 3.500 19.500 1.500 21 .5c2.500 1.500 2.500 4 1 7Z" fill="#c9a07a" />
      </Svg>
    ),
  },
];

const Taskbar = () => (
  <div className="h-10 bg-[#21221f] text-white flex items-stretch">
    <div className="w-12 flex items-center justify-center">
      <Svg className="w-4 h-4">
        <path d="M0 2.300 6.500 1.400v6.200H0ZM7.300 1.300 16 0v7.600H7.300ZM0 8.400h6.500v6.200L0 13.700ZM7.300 8.400H16V16l-8.700-1.300Z" fill="#fff" />
      </Svg>
    </div>
    <div className="w-12 flex items-center justify-center">
      <Svg className="w-4 h-4">
        <circle cx="10" cy="6" r="5.300" stroke="#fff" strokeWidth="1.300" />
        <path d="M6.200 9.800.5 15.500" stroke="#fff" strokeWidth="1.300" />
      </Svg>
    </div>
    <div className="w-12 flex items-center justify-center">
      <Svg className="w-4 h-4">
        <path d="M.5 0v2.500h10V0M.5 5.500h10v5H.5ZM.5 16v-2.500h10V16M14 0v3M14 8v8" stroke="#fff" strokeWidth="1.200" />
        <rect x="12.800" y="4.500" width="2.500" height="2.500" fill="#fff" />
      </Svg>
    </div>
    <div className="w-[7px]" />
    {apps.map((a) => (
      <div key={a.t} className="w-[152px] mr-[9px] border-b-2 border-[#76b9ed] flex items-center pl-[6px] pt-[2px] gap-1 whitespace-nowrap">
        {a.i}
        {a.t}
      </div>
    ))}
    <div className="w-40 -ml-[4px] bg-[#5b5e5d] border-b-2 border-[#76b9ed] flex items-center pl-[13px] pt-[2px] gap-[6px] whitespace-nowrap">
      <Primo className="w-[19px] h-6" face="#5b5e5d" />
      Primo Studio - C:\...
    </div>
    <div className="ml-auto flex items-center">
      <Svg className="w-3 h-[7px]" box="0 0 12 7"><path d="m.5 6.500 5.500-5.500 5.500 5.500" stroke="#fff" strokeWidth="1.300" /></Svg>
      <OneNote className="w-4 h-4 ml-[10px]" />
      <Svg className="w-4 h-4 ml-2">
        <rect x="3" y="0" width="12.500" height="13" fill="#28a8ea" />
        <rect x="9" y="0" width="6.500" height="5" fill="#50d9ff" />
        <path d="M3 8 16 7.500V15.500H3Z" fill="#1490df" />
        <path d="m16 7.500-6 4.500 6 3.500Z" fill="#0a6cbf" />
        <rect y="3" width="9.500" height="9.500" rx=".8" fill="#0f78d4" />
        <circle cx="4.700" cy="7.700" r="2.200" stroke="#fff" strokeWidth="1.400" />
      </Svg>
      <Svg className="w-4 h-4 ml-2">
        <circle cx="9" cy="2" r="2" fill="#7b83eb" />
        <circle cx="14" cy="3" r="1.500" fill="#5059c9" />
        <path d="M5 5h7v6c0 3-7 4-7 0ZM12.500 5.500H16v4c0 2-3.500 2-3.500 0Z" fill="#5b63cf" />
        <rect y="3.500" width="8" height="8" rx=".8" fill="#4b53bc" />
        <path d="M2 5.500h4M4 5.500v4.500" stroke="#fff" strokeWidth="1.200" />
        <circle cx="12.500" cy="12.500" r="3.500" fill="#92c353" />
        <path d="m11 12.500 1.200 1.200 2-2.200" stroke="#fff" />
      </Svg>
      <Svg className="w-4 h-4 ml-2">
        <path d="M3 0h8c2 0 2 2 4 4 1 2 1 6 0 9 0 2-1 3-3 3H5c-2 0-3-2-4-4-1.500-3-1-6-.5-9C.5 1 1 0 3 0Z" fill="#5ba818" />
        <path d="m5 8 2.300 2.300L11.500 6" stroke="#fff" strokeWidth="1.500" />
      </Svg>
      <Svg className="w-4 h-4 ml-2">
        <circle cx="8" cy="8" r="7" fill="#25b33e" stroke="#f4f4f4" strokeWidth="1.500" />
        <path d="M1 15.500 2 11l3.500 3.500Z" fill="#f4f4f4" />
        <text x="4.500" y="12.500" fontSize="12" fontWeight="800" fill="#e61c1c" stroke="#fff" strokeWidth=".3">2</text>
      </Svg>
      <Svg className="w-4 h-4 ml-2">
        <circle cx="8" cy="8" r="8" fill="#2aa1de" />
        <path d="m2.500 8 9.500-4-1.500 8.500L7.500 10.500 6 12V9.500Z" fill="#fff" />
      </Svg>
      <Svg className="w-4 h-4 ml-2">
        <path d="M5.500 4.500h9v7h-9" stroke="#fff" strokeWidth="1.200" />
        <path d="M7 6h6v4H7ZM15 6.500h1v3h-1Z" fill="#fff" />
        <path d="M1 2v2.500M4 2v2.500M.5 4.500h4v2a2 2 0 0 1-4 0ZM2.500 8.500v3H5" stroke="#fff" />
      </Svg>
      <Svg className="w-[13px] h-[13px] ml-[10px]" box="0 0 13 13">
        <path d="M1 13C1 6 6 1 13 1M4.500 13C4.500 8 8 4.500 13 4.500M8 13C8 10 10 8 13 8" stroke="#ddd" strokeWidth="1.200" />
        <circle cx="11.500" cy="11.500" r="1.500" fill="#fff" />
      </Svg>
      <Svg className="w-4 h-4 ml-[9px]">
        <path d="M.7 5.500h2.500L6.500 2v12L3.200 10.500H.7Z" stroke="#fff" strokeWidth="1.100" />
        <path d="M8.500 6c1 1 1 3 0 4M10.500 4.500c2 2 2 5 0 7" stroke="#fff" />
        <path d="M12.700 3c3 3 3 7 0 10" stroke="#777" />
      </Svg>
      <div className="ml-[9px] w-[25px] -translate-y-px">ENG</div>
      <div className="ml-[6px] w-[64px] text-center leading-[19px] tracking-[-0.45px] -translate-y-px">9:57<br />07.09.2021</div>
      <Svg className="w-6 h-6 ml-[13px] mt-1" box="0 0 24 24">
        <path d="M0 0h16v12H4l-4 3.500Z" fill="#fff" />
        <path d="M3 3.500h10M3 6h10M3 8.500h10" stroke="#222" />
        <circle cx="15.500" cy="15.500" r="7.700" fill="#2b2b2b" stroke="#999" strokeWidth="1" />
        <text x="12.300" y="19.500" fontSize="11" fill="#fff">3</text>
      </Svg>
      <div className="ml-[12px] w-px h-10 bg-[#555] mr-1" />
    </div>
  </div>
);

export default function App() {
  return (
    <div className="w-[2560px] h-[1080px] overflow-hidden bg-white text-[#3c3c3c] text-[12px] leading-[16px] tracking-[-0.34px] flex flex-col font-['Open_Sans','Noto_Sans',sans-serif]">
      <Defs />
      <TitleBar />
      <Ribbon />
      <div className="h-[857px] flex pt-[2px] shrink-0">
        <Elements />
        <div className="w-[1917px] ml-1 shrink-0">
          <Editor />
          <Variables />
        </div>
        <Properties />
        <RightTabs />
      </div>
      <div className="h-[25px] bg-[#106ebe] text-white flex items-center justify-end pr-1 pt-[2px] shrink-0 font-medium">
        <span>Оркестратор: Нет соединения</span>
        <div className="w-px h-[19px] bg-[#2f86cf] mx-2" />
        <span>Git: Нет соединения</span>
      </div>
      <Taskbar />
    </div>
  );
}
